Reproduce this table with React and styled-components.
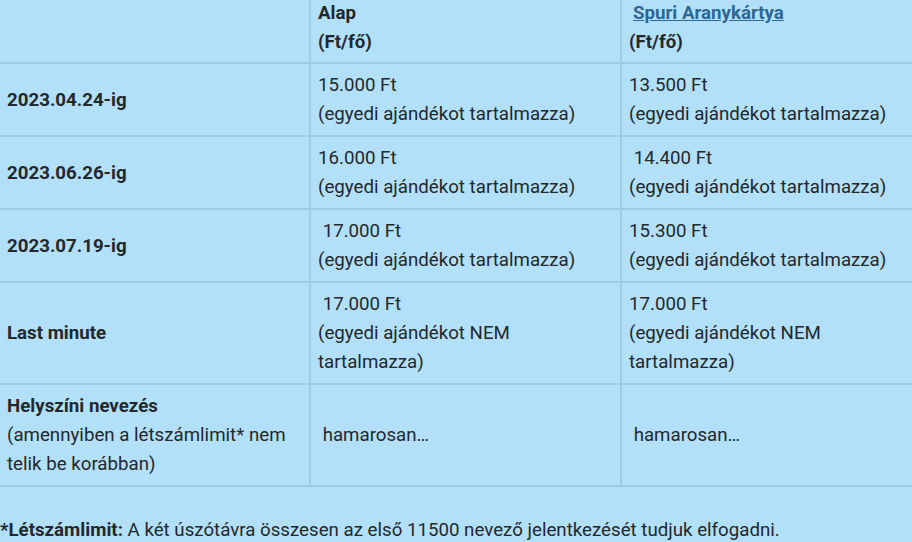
import React from 'react';
import styled, { createGlobalStyle } from 'styled-components';

const GlobalStyle = createGlobalStyle`
    html, body {
        margin: 0;
        padding: 0;
        background: #b2e0f8;
        overflow: hidden;
    }
    body {
        font-family: Roboto, 'Liberation Sans', sans-serif;
        font-size: 18.7px;
        line-height: 29px;
        color: #24282c;
    }
`;

const Page = styled.div`
    width: 912px;
    min-height: 542px;
    background: #b2e0f8;
`;

const Table = styled.table`
    width: 100%;
    border-collapse: collapse;
    table-layout: fixed;
    margin-top: -7px;

    col:first-child {
        width: 310px;
    }
    col:nth-child(2) {
        width: 311px;
    }
`;

const Row = styled.tr`
    & + & td {
        border-top: 2px solid #9bcbe5;
    }
`;

const Cell = styled.td`
    padding: 7px 7px 6px;
    vertical-align: ${(p) => (p.$middle ? 'middle' : 'top')};
    border-left: 2px solid #9bcbe5;
    font-weight: ${(p) => (p.$bold ? 700 : 400)};

    &:first-child {
        border-left: none;
    }
`;

const HeadCell = styled(Cell)`
    padding-top: 6px;
    padding-bottom: 5px;
    font-weight: 700;
`;

const Link = styled.a`
    color: #2d6794;
    text-decoration: underline;
    margin-left: 4px;
`;

const Line = styled.div`
    white-space: pre-wrap;
`;

const Note = styled.p`
    margin: 0;
    padding: 29px 0 0;
    border-top: 2px solid #9bcbe5;
`;

const gift = '(egyedi ajándékot tartalmazza)';
const noGift = '(egyedi ajándékot NEM tartalmazza)';

const rows = [
    { label: '2023.04.24-ig', a: '15.000 Ft', b: '13.500 Ft', note: gift },
    { label: '2023.06.26-ig', a: '16.000 Ft', b: '\u00a014.400 Ft', note: gift },
    { label: '2023.07.19-ig', a: '\u00a017.000 Ft', b: '15.300 Ft', note: gift },
    { label: 'Last minute', a: '\u00a017.000 Ft', b: '17.000 Ft', note: noGift },
];

export default function App() {
    return (
        <Page>
            <GlobalStyle />
            <Table>
                <colgroup>
                    <col />
                    <col />
                    <col />
                </colgroup>
                <tbody>
                    <Row>
                        <HeadCell />
                        <HeadCell>
                            <Line>Alap</Line>
                            <Line>(Ft/fő)</Line>
                        </HeadCell>
                        <HeadCell>
                            <Line>
                                <Link href="#">Spuri Aranykártya</Link>
                            </Line>
                            <Line>(Ft/fő)</Line>
                        </HeadCell>
                    </Row>
                    {rows.map((r) => (
                        <Row key={r.label}>
                            <Cell $middle $bold>
                                {r.label}
                            </Cell>
                            <Cell>
                                <Line>{r.a}</Line>
                                <Line>{r.note}</Line>
                            </Cell>
                            <Cell>
                                <Line>{r.b}</Line>
                                <Line>{r.note}</Line>
                            </Cell>
                        </Row>
                    ))}
                    <Row>
                        <Cell>
                            <Line>
                                <b>Helyszíni nevezés</b>
                            </Line>
                            <Line>(amennyiben a létszámlimit* nem telik be korábban)</Line>
                        </Cell>
                        <Cell $middle>{'\u00a0hamarosan…'}</Cell>
                        <Cell $middle>{'\u00a0hamarosan…'}</Cell>
                    </Row>
                </tbody>
            </Table>
            <Note>
                <b>*Létszámlimit:</b> A két úszótávra összesen az első 11500 nevező
                jelentkezését tudjuk elfogadni.
            </Note>
        </Page>
    );
}
